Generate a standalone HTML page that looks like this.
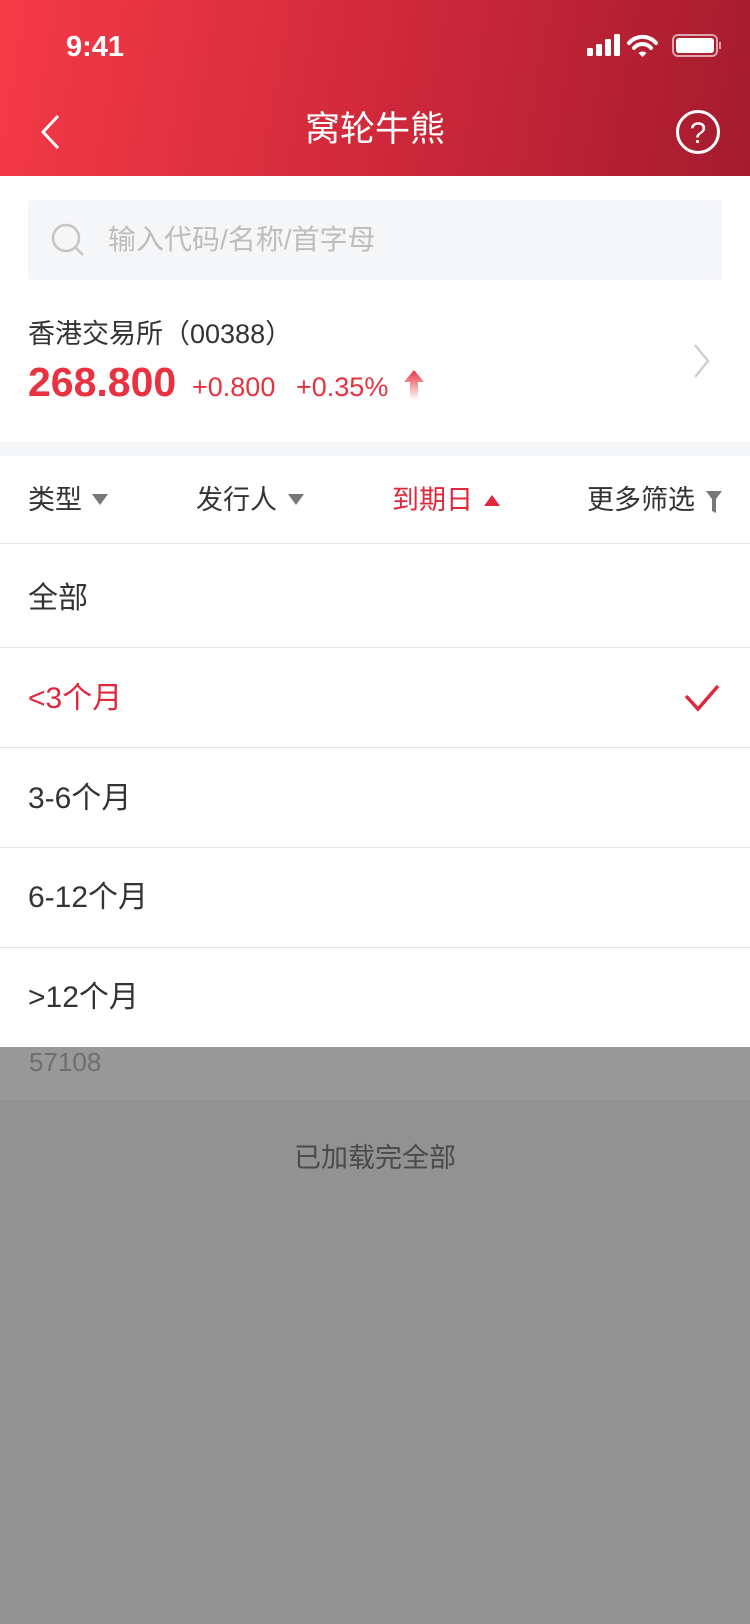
<!DOCTYPE html>
<html><head><meta charset="utf-8"><style>
*{margin:0;padding:0;box-sizing:border-box}
body{width:750px;height:1624px;overflow:hidden;background:#919291;font-family:"Liberation Sans","Noto Sans CJK SC",sans-serif;position:relative}
.abs{position:absolute}
.hdr{left:0;top:0;width:750px;height:176px;background:linear-gradient(100deg,#f53a47 0%,#d42b3c 45%,#a51b2e 100%)}
.white{left:0;top:176px;width:750px;height:871px;background:#fff}
.t{position:absolute;white-space:nowrap;line-height:1}
.row{position:absolute;left:0;width:750px;height:1px;background:#e6e6e6}
</style></head><body>
<div class="abs hdr"></div>
<div class="t" style="left:66px;top:33px;font-size:29px;font-weight:bold;color:#fff">9:41</div>
<svg class="abs" style="left:586px;top:33px" width="136" height="26" viewBox="0 0 136 26">
<rect x="1" y="15" width="6" height="8" rx="1.5" fill="#fff"/><rect x="10" y="11" width="6" height="12" rx="1.5" fill="#fff"/><rect x="19" y="6" width="6" height="17" rx="1.5" fill="#fff"/><rect x="28" y="1" width="6" height="22" rx="1.5" fill="#fff"/>
<path d="M43 10 A18 18 0 0 1 70 10" stroke="#fff" stroke-width="4" fill="none" stroke-linecap="round"/>
<path d="M48 15 A11 11 0 0 1 65 15" stroke="#fff" stroke-width="4" fill="none" stroke-linecap="round"/>
<path d="M52.5 20 L56.5 24 L60.5 20 A6 6 0 0 0 52.5 20Z" fill="#fff"/>
<rect x="87" y="2" width="44" height="21" rx="5" stroke="rgba(255,255,255,.6)" stroke-width="2" fill="none"/>
<rect x="90" y="5" width="38" height="15" rx="3" fill="#fff"/>
<rect x="133" y="9" width="2" height="7" fill="rgba(255,255,255,.6)"/></svg>
<svg class="abs" style="left:38px;top:114px" width="26" height="36"><path d="M20 2 L5 18 L20 34" stroke="#fff" stroke-width="3" fill="none"/></svg>
<div class="t" style="left:0;width:750px;text-align:center;top:112px;font-size:35px;color:#fff">窝轮牛熊</div>
<svg class="abs" style="left:675px;top:109px" width="46" height="46"><circle cx="23" cy="23" r="20.5" stroke="#fff" stroke-width="3" fill="none"/><text x="23" y="34" text-anchor="middle" font-size="30" fill="#fff" font-family="Liberation Sans">?</text></svg>
<div class="abs white"></div>
<div class="abs" style="left:28px;top:200px;width:694px;height:80px;background:#f5f6f8;border-radius:4px"></div>
<svg class="abs" style="left:50px;top:222px" width="36" height="36"><circle cx="16" cy="16" r="13" stroke="#c5c5c5" stroke-width="2.5" fill="none"/><path d="M25 25 L33 33" stroke="#c5c5c5" stroke-width="2.5"/></svg>
<div class="t" style="left:108px;top:226px;font-size:28px;color:#bdbdbd">输入代码/名称/首字母</div>
<div class="t" style="left:28px;top:321px;font-size:27px;color:#333">香港交易所（00388）</div>
<div class="t" style="left:28px;top:362px;font-size:41px;color:#e8323f;font-weight:bold">268.800</div>
<div class="t" style="left:192px;top:374px;font-size:27px;color:#e8323f">+0.800</div>
<div class="t" style="left:296px;top:374px;font-size:27px;color:#e8323f">+0.35%</div>
<svg class="abs" style="left:402px;top:368px" width="24" height="32"><defs><linearGradient id="g" x1="0" y1="0" x2="0" y2="1"><stop offset="0" stop-color="#e8323f"/><stop offset="1" stop-color="#e8323f" stop-opacity="0"/></linearGradient></defs><path d="M12 2 L22 14 L16 14 L16 32 L8 32 L8 14 L2 14Z" fill="url(#g)"/></svg>
<svg class="abs" style="left:692px;top:342px" width="20" height="38"><path d="M3 3 L16 19 L3 35" stroke="#d0d0d0" stroke-width="2.5" fill="none"/></svg>
<div class="abs" style="left:0;top:442px;width:750px;height:14px;background:#f5f6f8"></div>
<div class="t" style="left:28px;top:487px;font-size:27px;color:#333">类型</div>
<svg class="abs" style="left:91px;top:493px" width="18" height="14"><path d="M1 1 L17 1 L9 12Z" fill="#777"/></svg>
<div class="t" style="left:196px;top:487px;font-size:27px;color:#333">发行人</div>
<svg class="abs" style="left:287px;top:493px" width="18" height="14"><path d="M1 1 L17 1 L9 12Z" fill="#777"/></svg>
<div class="t" style="left:392px;top:487px;font-size:27px;color:#e0283c">到期日</div>
<svg class="abs" style="left:483px;top:493px" width="18" height="14"><path d="M1 13 L17 13 L9 2Z" fill="#e0283c"/></svg>
<div class="t" style="left:587px;top:487px;font-size:27px;color:#333">更多筛选</div>
<svg class="abs" style="left:705px;top:489px" width="18" height="26"><path d="M1 2 L17 2 L11 10 L11 24 L7 22 L7 10Z" fill="#777"/></svg>
<div class="row" style="top:543px"></div>
<div class="t" style="left:28px;top:584px;font-size:30px;color:#333">全部</div>
<div class="row" style="top:647px"></div>
<div class="t" style="left:28px;top:684px;font-size:30px;color:#e0283c">&lt;3个月</div>
<svg class="abs" style="left:683px;top:682px" width="38" height="32"><path d="M3 14 L15 27 L35 4" stroke="#e0283c" stroke-width="3.5" fill="none"/></svg>
<div class="row" style="top:747px"></div>
<div class="t" style="left:28px;top:784px;font-size:30px;color:#333">3-6个月</div>
<div class="row" style="top:847px"></div>
<div class="t" style="left:28px;top:883px;font-size:30px;color:#333">6-12个月</div>
<div class="row" style="top:947px"></div>
<div class="t" style="left:28px;top:983px;font-size:30px;color:#333">&gt;12个月</div>
<div class="abs" style="left:0;top:1047px;width:750px;height:53px;background:#989898"></div>
<div class="t" style="left:29px;top:1049px;font-size:26px;color:#6f6f6f">57108</div>
<div class="t" style="left:0;width:750px;text-align:center;top:1145px;font-size:27px;color:#4a4a4a">已加载完全部</div>
</body></html>
